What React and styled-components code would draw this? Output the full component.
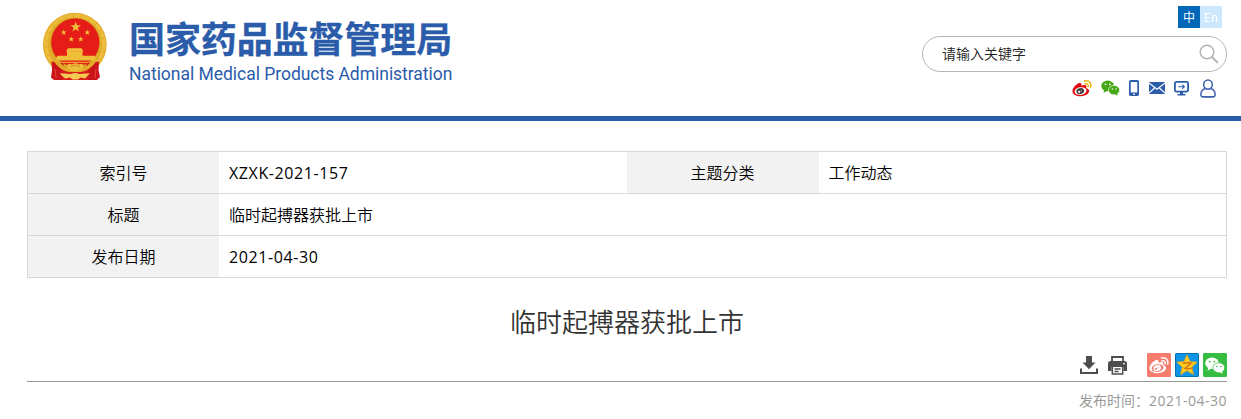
import React, { useState } from "react";
import styled, { createGlobalStyle } from "styled-components";

const GlobalStyle = createGlobalStyle`
  * {
    box-sizing: border-box;
  }
  body {
    margin: 0;
    background: #fff;
    color: #000;
    font-family: "Open Sans", "Noto Sans CJK SC", sans-serif;
    font-size: 16px;
  }
`;

const STAR = "M0 -5 L1.18 -1.62 L4.76 -1.55 L1.9 0.62 L2.94 4.05 L0 2 L-2.94 4.05 L-1.9 0.62 L-4.76 -1.55 L-1.18 -1.62 Z";

const Emblem = () => (
  <svg width="66" height="70" viewBox="0 0 66 70">
    <circle cx="32.800" cy="32.600" r="31.900" fill="#e2ac28" />
    <circle cx="32.800" cy="32.400" r="29" fill="none" stroke="#ecbd3c" strokeWidth="3.500" strokeDasharray="7 1" />
    <circle cx="33.200" cy="30.600" r="24.600" fill="#c98a17" />
    <circle cx="33.300" cy="30.400" r="24" fill="#e51c18" />
    <g fill="#f0bf3a">
      <path d={STAR} transform="translate(33.700 15) scale(1.1)" />
      <path d={STAR} transform="translate(21.700 20.500) scale(.6)" />
      <path d={STAR} transform="translate(45.300 20.500) scale(.6)" />
      <path d={STAR} transform="translate(29.300 27.200) scale(.6)" />
      <path d={STAR} transform="translate(38.700 27.200) scale(.6)" />
      <path d="M26 36.300h13.500l2 3.400H24z" />
      <path d="M25 39.500h15.500v4.500H25z" />
      <path d="M15.500 43.800h37l1.500 2.400-1.500 2.400h-37L14 46.200z" />
    </g>
    <path d="M14 50.300h39" stroke="#f0bf3a" strokeWidth="1" />
    <path d="M9.500 49.500 L21 51 L23 57 L22 68 H12 L9 65.500 L10 58z" fill="#cb151b" />
    <path d="M57 49.500 L45 51 L43 57 L44 68 H55 L58 65 L56.500 58z" fill="#cb151b" />
    <path d="M20 54 L33 58 L46 54 L46 68 H20z" fill="#dc1b1c" />
    <path d="M11.500 49 Q18 58.500 27 60 L39 60 Q48 58.500 54.500 49 L50.500 48.500 Q45 54.500 39 56.700 L27 56.700 Q21 54.500 16 48.500z" fill="#e2ac28" />
    <path d="M24.500 55 Q26 50 30 52.500 Q33.500 50 37 52.500 Q41 50 42 55 Q38 59.500 33.500 59.500 Q28 59.500 24.500 55z" fill="#edbd3b" />
    <path d="M28.500 55 Q33.500 51.500 38 55" stroke="#d08f1c" strokeWidth="1" fill="none" />
    <path d="M17.500 61.300 L29 62 Q33 60 37 62 L48 61.300 L43 66.500 L38.500 65.500 L36 67.500 H30.500 L28 65.500 L23 66.500z" fill="#f2cb52" />
    <path d="M13 57l1 9M54 57l-1 9" stroke="#e8453a" strokeWidth="1" />
  </svg>
);

// body / eye / waves are coloured separately so both weibo icons can share it
const Weibo = ({ size, body, eye, pupil, wave }) => (
  <svg width={size} height={size} viewBox="0 0 20 20">
    <path
      d="M.5 13.200C.5 10 4.500 5.500 7.700 5.100c1.700-.2 2.100 1 1.700 2.600 2-.8 4.900-1.200 5 .9 0 .6-.3 1-.3 1.400 1.500.4 3 1.200 3 3 0 3-4.200 5.200-8.400 5.200S.5 16.400.5 13.200z"
      fill={body}
    />
    <ellipse cx="8.500" cy="13.100" rx="6" ry="3.900" fill={eye} transform="rotate(-7 8.500 13.100)" />
    <ellipse cx="8.300" cy="13.200" rx="3.900" ry="3" fill={pupil} transform="rotate(-15 8 13.300)" />
    <circle cx="7.200" cy="13.800" r="1.100" fill={eye} />
    <circle cx="9.200" cy="12.800" r=".5" fill={eye} />
    <path d="M12.500 3c4-1.100 7.300 1.900 6.100 6M13 5.800c2.200-.5 3.600.8 3.100 2.900" fill="none" stroke={wave} strokeWidth="1.500" strokeLinecap="round" />
  </svg>
);

const Wechat = ({ width, height, color, hole }) => (
  <svg width={width} height={height} viewBox="0 0 20 17">
    <ellipse cx="7" cy="6.300" rx="6.800" ry="5.700" fill={color} />
    <path d="M3.500 10 L2.400 13.700 L6.500 11.500z" fill={color} />
    <circle cx="4.700" cy="4.600" r=".95" fill={hole} />
    <circle cx="9.300" cy="4.600" r=".95" fill={hole} />
    <ellipse cx="13.800" cy="10.800" rx="5.900" ry="5" fill={color} stroke={hole} strokeWidth=".7" />
    <path d="M14.500 15 L17.700 16.700 L17 13.800z" fill={color} />
    <circle cx="11.900" cy="9.500" r=".8" fill={hole} />
    <circle cx="15.800" cy="9.500" r=".8" fill={hole} />
  </svg>
);

const Phone = () => (
  <svg width="10" height="16" viewBox="0 0 10 16">
    <rect width="10" height="16" rx="1.800" fill="#2a5caa" />
    <rect x="1.700" y="2" width="6.600" height="10.400" fill="#fff" />
    <rect x="4" y="13.500" width="2" height="1.200" fill="#fff" />
  </svg>
);

const Mail = () => (
  <svg width="16" height="12" viewBox="0 0 16 12">
    <rect width="16" height="12" rx=".6" fill="#2a5caa" />
    <path d="M0 1l8 6.300L16 1M0 11l5.600-5M16 11l-5.600-5" fill="none" stroke="#fff" strokeWidth="1.100" />
  </svg>
);

const Monitor = () => (
  <svg width="15" height="15" viewBox="0 0 15 15">
    <rect x=".9" y=".9" width="13.200" height="9.700" rx="1.500" fill="none" stroke="#2a5caa" strokeWidth="1.800" />
    <path d="M4.300 5.700h6M8.200 3.600l2.200 2.100-2.200 2.100" fill="none" stroke="#2a5caa" strokeWidth="1.100" />
    <path d="M6 10.500h3v2.500h2.500v1.600h-8V13H6z" fill="#2a5caa" />
  </svg>
);

const User = () => (
  <svg width="16" height="19" viewBox="0 0 17 19" preserveAspectRatio="none">
    <circle cx="8.500" cy="5.600" r="4.600" fill="none" stroke="#3f5fb0" strokeWidth="1.600" />
    <path d="M5.300 9.500C2.800 10.500.9 12.800.9 15.600c0 1.500.8 2.300 2.200 2.300h10.800c1.400 0 2.200-.8 2.200-2.300 0-2.800-1.900-5.100-4.400-6.100" fill="none" stroke="#3f5fb0" strokeWidth="1.600" />
  </svg>
);

const SearchIcon = () => (
  <svg width="20" height="20" viewBox="0 0 20 20">
    <circle cx="8" cy="8" r="6.800" fill="none" stroke="#b3b3b3" strokeWidth="1.500" />
    <path d="M13 13l6 6" stroke="#b3b3b3" strokeWidth="1.800" />
  </svg>
);

const Download = () => (
  <svg width="18" height="18" viewBox="0 0 18 18">
    <path d="M6 0h6v6.500h3.500L9 13.300 2.500 6.500H6z" fill="#4d4d4d" />
    <path d="M1 12.500v4.400h16v-4.400" fill="none" stroke="#4d4d4d" strokeWidth="2" />
  </svg>
);

const Printer = () => (
  <svg width="19" height="19" viewBox="0 0 19 19">
    <path d="M4 5V1h11v4" fill="none" stroke="#4d4d4d" strokeWidth="1.800" />
    <path d="M2.500 5h14Q19 5 19 7.500V15h-3.500v-4h-12v4H0V7.500Q0 5 2.500 5z" fill="#4d4d4d" />
    <circle cx="16" cy="7.600" r=".9" fill="#fff" />
    <path d="M4.300 10.200h10.400v7.900H4.300z" fill="#fff" stroke="#4d4d4d" strokeWidth="1.500" />
    <path d="M6.500 13h6M6.500 15.500h4" stroke="#4d4d4d" strokeWidth="1.300" />
  </svg>
);

const Qzone = () => (
  <svg width="22" height="22" viewBox="0 0 22 22">
    <path
      d="M11 .8l3 6.700 7.200.7-5.400 4.900 1.700 7.400L11 16.700l-6.500 3.800 1.700-7.400L.8 8.200 8 7.500z"
      fill="#ffce1f"
      stroke="#e0a11a"
      strokeWidth=".8"
      strokeLinejoin="round"
    />
    <path d="M6.800 9.300c3-.7 5.500-.7 8.300-.2l-6 5.200c2.500.5 5 .5 7.500-.3" fill="none" stroke="#d9731a" strokeWidth="1.500" />
  </svg>
);

const App = () => {
  const [keyword, setKeyword] = useState("");

  return (
    <>
      <GlobalStyle />
      <Header>
        <Logo>
          <Emblem />
          <LogoText>
            <LogoName>国家药品监督管理局</LogoName>
            <LogoEn>National Medical Products Administration</LogoEn>
          </LogoText>
        </Logo>
        <Tools>
          <LangBox>
            <Lang $active>中</Lang>
            <Lang>En</Lang>
          </LangBox>
          <SearchBox>
            <SearchInput
              placeholder="请输入关键字"
              value={keyword}
              onChange={(e) => setKeyword(e.target.value)}
            />
            <SearchIcon />
          </SearchBox>
          <IconRow>
            <IconSlot $w={29}>
              <Weibo size={20} body="#e2070f" eye="#fff" pupil="#44403f" wave="#eeb012" />
            </IconSlot>
            <IconSlot $w={28}>
              <Wechat width={19} height={16} color="#45a814" hole="#fff" />
            </IconSlot>
            <IconSlot $w={20}>
              <Phone />
            </IconSlot>
            <IconSlot $w={25}>
              <Mail />
            </IconSlot>
            <IconSlot $w={26}>
              <Monitor />
            </IconSlot>
            <IconSlot $w={17}>
              <User />
            </IconSlot>
          </IconRow>
        </Tools>
      </Header>

      <Main>
        <InfoTable>
          <tbody>
            <tr>
              <Th>索引号</Th>
              <Td>
                <Code>XZXK-2021-157</Code>
              </Td>
              <Th>主题分类</Th>
              <Td>工作动态</Td>
            </tr>
            <tr>
              <Th>标题</Th>
              <Td colSpan={3}>临时起搏器获批上市</Td>
            </tr>
            <tr>
              <Th>发布日期</Th>
              <Td colSpan={3}>
                <Code>2021-04-30</Code>
              </Td>
            </tr>
          </tbody>
        </InfoTable>

        <Title>临时起搏器获批上市</Title>

        <ShareRow>
          <Download />
          <PrintButton>
            <Printer />
          </PrintButton>
          <Share $bg="#f67c6d">
            <Weibo size={20} body="#fff" eye="#f67c6d" pupil="#fff" wave="#fff" />
          </Share>
          <Share $bg="#0e95e5" $border="#0b6fb5">
            <Qzone />
          </Share>
          <Share $bg="#37bd42">
            <Wechat width={20} height={17} color="#fff" hole="#37bd42" />
          </Share>
        </ShareRow>
        <PubTime>
          发布时间：<PubDate>2021-04-30</PubDate>
        </PubTime>
      </Main>
    </>
  );
};

const Header = styled.div`
  display: flex;
  justify-content: space-between;
  height: 121px;
  padding: 0 14px 0 42px;
  border-bottom: 5px solid #2a5caa;
`;

const Logo = styled.div`
  display: flex;
  padding-top: 12px;

  svg {
    display: block;
  }
`;

const LogoText = styled.div`
  margin-left: 21px;
  padding-top: 3px;
  color: #2a5caa;
  white-space: nowrap;
`;

const LogoName = styled.div`
  font-family: "Noto Sans CJK SC", sans-serif;
  font-size: 36px;
  font-weight: 700;
  line-height: 44px;
  letter-spacing: -0.1px;
  -webkit-text-stroke: 0.3px #2a5caa;
`;

const LogoEn = styled.div`
  margin-top: 3px;
  font-family: Roboto, "Liberation Sans", sans-serif;
  font-size: 17.5px;
  line-height: 24px;
  letter-spacing: -0.03px;
`;

const Tools = styled.div`
  width: 305px;
  padding-top: 6px;
`;

const LangBox = styled.div`
  display: flex;
  justify-content: flex-end;
  padding-right: 5px;
`;

const Lang = styled.div`
  width: 22px;
  height: 22px;
  line-height: 22px;
  text-align: center;
  font-family: "Noto Sans CJK SC", sans-serif;
  font-size: 12px;
  font-weight: 400;
  color: #fff;
  background: ${(props) => (props.$active ? "#0068b7" : "#cce8ff")};
`;

const SearchBox = styled.div`
  display: flex;
  align-items: center;
  height: 36px;
  margin-top: 8px;
  padding: 0 7px 0 19px;
  border: 1px solid #b5b5b5;
  border-radius: 18px;
`;

const SearchInput = styled.input`
  flex: 1;
  min-width: 0;
  padding: 0 0 2px;
  border: none;
  outline: none;
  background: none;
  font-family: "Noto Sans CJK SC", sans-serif;
  font-size: 14px;
  font-weight: 350;

  &::placeholder {
    color: #222;
    opacity: 1;
  }
`;

const IconRow = styled.div`
  display: flex;
  justify-content: flex-end;
  align-items: center;
  height: 20px;
  margin-top: 6px;
  padding-right: 10px;
`;

const IconSlot = styled.div`
  display: flex;
  width: ${(props) => props.$w}px;
`;

const Main = styled.div`
  width: 1200px;
  margin: 30px 0 0 27px;
`;

const InfoTable = styled.table`
  width: 100%;
  table-layout: fixed;
  border-collapse: separate;
  border-spacing: 0;
  border: 1px solid #d8d8d8;
  border-bottom: none;
`;

const Th = styled.th`
  width: 192px;
  height: 42px;
  padding: 0 0 2px;
  font-family: "Noto Sans CJK SC", sans-serif;
  font-weight: 350;
  background: #f2f2f2;
  border-bottom: 1px solid #d8d8d8;

  &:first-child {
    width: 191px;
  }
`;

const Td = styled.td`
  height: 42px;
  padding: 0 10px 2px;
  font-family: "Noto Sans CJK SC", sans-serif;
  font-weight: 350;
  border-bottom: 1px solid #d8d8d8;
`;

const Code = styled.span`
  font-family: "Open Sans", sans-serif;
  font-weight: 400;
  letter-spacing: 0.6px;
`;

const Title = styled.div`
  margin-top: 23px;
  height: 40px;
  line-height: 40px;
  text-align: center;
  font-family: "Noto Sans CJK SC", sans-serif;
  font-size: 26px;
  font-weight: 350;
  color: #333;
`;

const ShareRow = styled.div`
  display: flex;
  justify-content: flex-end;
  align-items: center;
  height: 41px;
  padding-top: 8px;
  border-bottom: 1px solid #999;
`;

const PrintButton = styled.div`
  display: flex;
  margin: 0 20px 0 10px;

  & + div {
    margin-left: 0;
  }
`;

const Share = styled.div`
  display: flex;
  align-items: center;
  justify-content: center;
  width: 24px;
  height: 24px;
  margin-left: 4px;
  border-radius: 2px;
  background: ${(props) => props.$bg};
  box-shadow: inset 0 0 0 1px ${(props) => props.$border || props.$bg};
`;

const PubTime = styled.div`
  display: flex;
  justify-content: flex-end;
  margin-top: 9px;
  line-height: 20px;
  font-size: 14px;
  color: #999;
`;

const PubDate = styled.span`
  letter-spacing: 0.5px;
`;

export default App;
